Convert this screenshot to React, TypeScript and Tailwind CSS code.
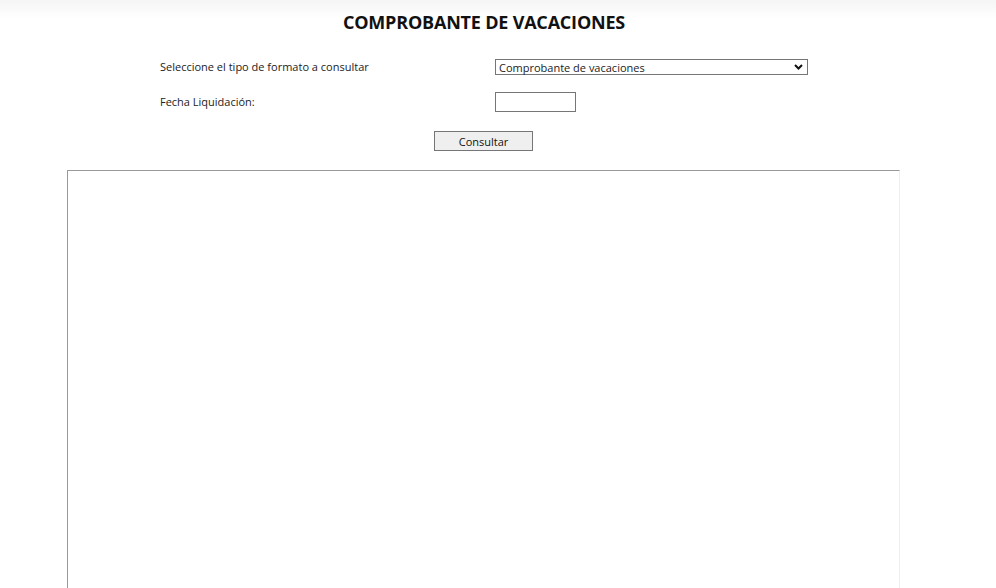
import React from 'react';

const font = { fontFamily: '"Open Sans", "Noto Sans", sans-serif' };

export default function App() {
  return (
    <div
      className="h-screen overflow-hidden bg-white bg-gradient-to-b from-[#f5f5f5] to-white bg-no-repeat bg-[length:100%_18px] text-[#222]"
      style={font}
    >
      <div className="w-[968px] h-full flex flex-col">
        <h1 className="text-center text-[18px] font-bold text-[#111] leading-none pt-[13px] tracking-[-0.2px]">
          COMPROBANTE DE VACACIONES
        </h1>

        {/* form */}
        <div className="ml-[160px] w-[648px] mt-[28px] flex flex-col text-[11px]">
          <div className="flex items-center h-[16px]">
            <span className="w-[335px]">Seleccione el tipo de formato a consultar</span>
            <div className="flex-1 h-[16px] border border-[#767676] flex items-center justify-between pl-[3px] pr-[4px]">
              <span className="leading-none">Comprobante de vacaciones</span>
              <svg width="9" height="6" viewBox="0 0 9 6" fill="none" stroke="#111" strokeWidth="2">
                <path d="M1 1l3.5 3.5L8 1" />
              </svg>
            </div>
          </div>
          <div className="flex items-center h-[20px] mt-[17px]">
            <span className="w-[335px]">Fecha Liquidación:</span>
            <div className="w-[81px] h-[20px] border border-[#767676] bg-white" />
          </div>
        </div>

        <div className="flex justify-center mt-[19px] ml-[-1px]">
          <button className="w-[99px] h-[20px] border border-[#767676] bg-[#efefef] text-[11px] leading-none text-[#111]">
            Consultar
          </button>
        </div>

        {/* report frame, runs past the bottom of the window */}
        <div className="ml-[67px] mt-[19px] w-[833px] flex-1 border-t border-l border-[#999] border-r border-r-[#eee]" />
      </div>
    </div>
  );
}
